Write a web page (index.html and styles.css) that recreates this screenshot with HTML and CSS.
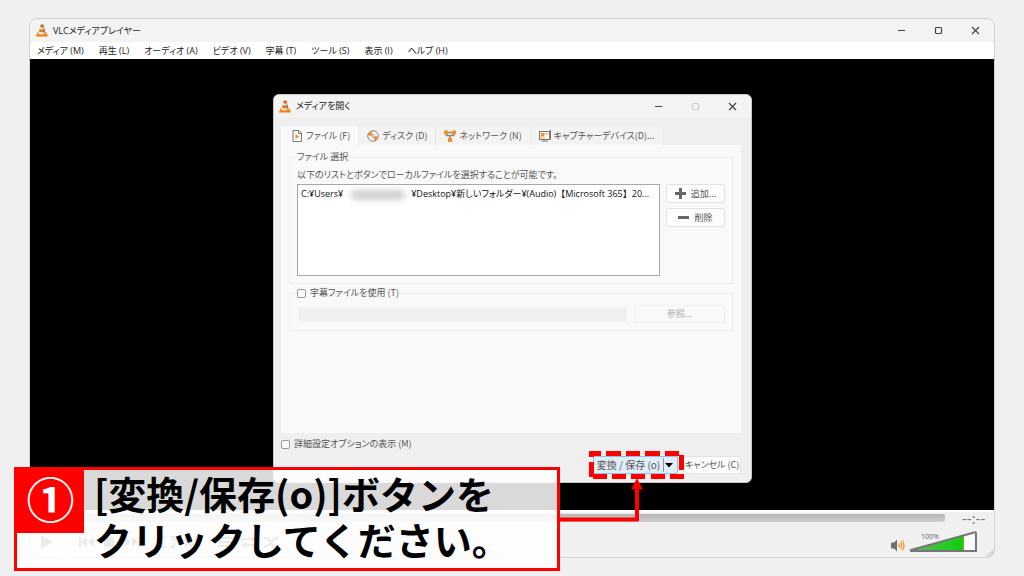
FILE: index.html
```html
<!DOCTYPE html>
<html lang="ja">
<head>
<meta charset="utf-8">
<title>VLCメディアプレイヤー</title>
<link rel="stylesheet" href="styles.css">
</head>
<body>
<svg class="defs" width="0" height="0" aria-hidden="true">
  <symbol id="cone" viewBox="0 0 24 26">
    <path d="M3 17h18l3 8H0z" fill="#f57c00"/>
    <path d="M3 17h18l1 4H2z" fill="#ff9a2a"/>
    <path d="M9.500 1h5l5 18q-7.500 4-15 0z" fill="#e4e4e4"/>
    <path d="M9.500 1h5l1.400 5q-3.900 1.500-7.800 0z" fill="#d8701a"/>
    <path d="M7 10q5 2 10 0l1.400 5q-6.500 2.500-12.800 0z" fill="#e07a20"/>
    <path d="M14.500 1l5 18q-2 1-4 1.500L13 1z" fill="#6a5a50" opacity=".45"/>
  </symbol>
</svg>

<main class="player">
  <header class="titlebar">
    <svg class="app-icon"><use href="#cone"/></svg>
    <h1 class="title">VLCメディアプレイヤー</h1>
    <div class="window-buttons">
      <button type="button" aria-label="最小化"><svg viewBox="0 0 9 9"><path d="M1 4.500h7"/></svg></button>
      <button type="button" aria-label="最大化"><svg viewBox="0 0 9 9"><rect x="1.500" y="1.500" width="6" height="6" rx="1"/></svg></button>
      <button type="button" aria-label="閉じる"><svg viewBox="0 0 9 9"><path d="M1 1l7 7M8 1l-7 7"/></svg></button>
    </div>
  </header>
  <nav class="menu">
    <a href="#">メディア (M)</a>
    <a href="#">再生 (L)</a>
    <a href="#">オーディオ (A)</a>
    <a href="#">ビデオ (V)</a>
    <a href="#">字幕 (T)</a>
    <a href="#">ツール (S)</a>
    <a href="#">表示 (I)</a>
    <a href="#">ヘルプ (H)</a>
  </nav>
  <div class="video"></div>
  <footer class="controls">
    <div class="seek">
      <div class="track"></div>
      <span class="time">--:--</span>
    </div>
    <div class="toolbar">
      <button type="button" class="play" aria-label="再生"><svg viewBox="0 0 14 16"><path d="M0 0l14 8L0 16z"/></svg></button>
      <div class="group">
        <button type="button" aria-label="前へ"><svg viewBox="0 0 15 10"><path d="M0 0h2v10H0zM8 0v10L2 5zM15 0v10L9 5z"/></svg></button>
        <button type="button" aria-label="停止"><svg viewBox="0 0 15 10"><path d="M2 0h10v10H2z"/></svg></button>
        <button type="button" aria-label="次へ"><svg viewBox="0 0 15 10"><path d="M13 0h2v10h-2zM7 0v10l6-5zM0 0v10l6-5z"/></svg></button>
      </div>
      <div class="group">
        <button type="button" aria-label="全画面"><svg viewBox="0 0 15 12"><path d="M0 0h5v2H2v3H0zM10 0h5v5h-2V2h-3zM0 7h2v3h3v2H0zM13 7h2v5h-5v-2h3z"/></svg></button>
        <button type="button" aria-label="拡張設定"><svg viewBox="0 0 15 12"><path d="M2 0h2v12H2zM7 0h2v12H7zM12 0h2v12h-2zM0 3h6v2H0zM5 7h6v2H5z"/></svg></button>
      </div>
      <div class="group">
        <button type="button" aria-label="プレイリスト"><svg viewBox="0 0 15 12"><path d="M0 1h15v2H0zM0 5h15v2H0zM0 9h15v2H0z"/></svg></button>
        <button type="button" aria-label="リピート"><svg viewBox="0 0 15 12"><path d="M0 5V2h10V0l5 3-5 3V4H2v1zM15 7v3H5v2L0 9l5-3v2h8V7z"/></svg></button>
        <button type="button" aria-label="ランダム"><svg viewBox="0 0 15 12"><path d="M0 1h4l6 8h2V7l3 3-3 2H9L3 3H0zM0 9h3l7-8h2V0l3 2-3 3V3h-1l-7 8H0z"/></svg></button>
      </div>
      <div class="volume">
        <svg class="speaker" viewBox="0 0 14 12"><path d="M0 3h3l3-3v12L3 9H0z" fill="#707070"/><path d="M7.500 4q1.500 2 0 4M9.500 2.500q2.500 3.500 0 7M11.300 1q3.500 5 0 10" fill="none" stroke="#f79a2b" stroke-width="1.300"/></svg>
        <svg class="level" viewBox="0 0 70 24" role="img" aria-label="100%">
          <defs><linearGradient id="vol"><stop offset="0" stop-color="#6fa76f"/><stop offset=".7" stop-color="#22cf22"/><stop offset="1" stop-color="#12c812"/></linearGradient></defs>
          <path d="M2 20L67 2v19H2z" fill="#fafafa"/>
          <path d="M2 20L55 5.500V21H2z" fill="url(#vol)"/>
          <path d="M54.500 6v15" stroke="#78b800" stroke-width="1"/>
          <path d="M2 20L65 2.500q2-.5 2 1V21H3q-2 0-1-1z" fill="none" stroke="#777" stroke-width="2"/>
          <text x="12" y="9" class="percent">100%</text>
        </svg>
      </div>
    </div>
    <svg class="grip" viewBox="0 0 8 8"><path d="M6 0h2v2H6zM3 3h2v2H3zM6 3h2v2H6zM0 6h2v2H0zM3 6h2v2H3zM6 6h2v2H6z"/></svg>
  </footer>
</main>

<section class="dialog" role="dialog" aria-labelledby="dlg-title">
  <header class="dialog-title">
    <svg class="app-icon"><use href="#cone"/></svg>
    <h2 class="title" id="dlg-title">メディアを開く</h2>
    <div class="window-buttons">
      <button type="button" aria-label="最小化"><svg viewBox="0 0 9 9"><path d="M1 4.500h7"/></svg></button>
      <button type="button" aria-label="最大化" disabled><svg viewBox="0 0 9 9"><rect x="1.500" y="1.500" width="6" height="6" rx="1"/></svg></button>
      <button type="button" aria-label="閉じる"><svg viewBox="0 0 9 9"><path d="M1 1l7 7M8 1l-7 7"/></svg></button>
    </div>
  </header>
  <div class="dialog-body">
    <div class="tabs" role="tablist">
      <button type="button" role="tab" aria-selected="true" class="tab active">
        <svg viewBox="0 0 12 12"><path d="M2 .5h6l2.500 2.500v8.500H2z" fill="#fff" stroke="#777"/><path d="M7.500.5V3.500h3" fill="none" stroke="#777"/><path d="M4.500 4l4 2.500-4 2.500z" fill="#f5921e"/></svg>
        ファイル (F)</button>
      <button type="button" role="tab" aria-selected="false" class="tab">
        <svg viewBox="0 0 12 12"><circle cx="6" cy="6" r="5.300" fill="#f4f4f4" stroke="#888"/><path d="M6 6L1 5.500A5 5 0 0 1 4.500 1.300zM6 6l5 .5a5 5 0 0 1-3.500 4.200z" fill="#f5921e"/><circle cx="6" cy="6" r="1.300" fill="#fff" stroke="#999" stroke-width=".8"/></svg>
        ディスク (D)</button>
      <button type="button" role="tab" aria-selected="false" class="tab">
        <svg viewBox="0 0 12 12"><path d="M2 2.500h8M2.500 3v2.500h7V3M6 5v4" stroke="#888" stroke-width="1.500" fill="none"/><path d="M0 .5h4v4H0zM8 .5h4v4H8zM4 8h4v4H4z" fill="#f5921e"/></svg>
        ネットワーク (N)</button>
      <button type="button" role="tab" aria-selected="false" class="tab">
        <svg viewBox="0 0 12 12"><path d="M.6 1.500h10v8H.6z" fill="#fff" stroke="#777" stroke-width="1.200"/><path d="M2 3h3.500v3.500H2z" fill="#f5921e"/><path d="M2 7h4v1.500H2zM6.500 3h2.500v2H6.500z" fill="#fbc57f"/><path d="M11.300 0v9.500M2.500 11h6.500M9.500 1.500H12" stroke="#777" stroke-width="1.200"/></svg>
        キャプチャーデバイス(D)...</button>
    </div>
    <div class="panel" role="tabpanel">
      <fieldset class="box">
        <legend>ファイル 選択</legend>
        <p class="hint">以下のリストとボタンでローカルファイルを選択することが可能です。</p>
        <div class="files">
          <div class="list" role="listbox" aria-label="ファイル">
            <div class="file" role="option"><span>C:¥Users¥</span><i class="masked"></i><span>¥Desktop¥新しいフォルダー¥(Audio)<span class="full">【Microsoft 365】</span>20...</span></div>
          </div>
          <div class="actions">
            <button type="button" class="btn"><svg viewBox="0 0 11 11"><path d="M4 0h3v4h4v3H7v4H4V7H0V4h4z"/></svg>追加...</button>
            <button type="button" class="btn"><svg viewBox="0 0 11 11"><path d="M0 4h11v3H0z"/></svg>削除</button>
          </div>
        </div>
      </fieldset>
      <fieldset class="box subtitles">
        <legend><label class="check"><input type="checkbox">字幕ファイルを使用 (T)</label></legend>
        <div class="browse">
          <input type="text" class="path" aria-label="字幕ファイル" disabled>
          <button type="button" class="btn" disabled>参照...</button>
        </div>
      </fieldset>
    </div>
    <label class="check more"><input type="checkbox">詳細設定オプションの表示 (M)</label>
    <div class="dialog-actions">
      <button type="button" class="btn convert">変換 / 保存 (o)<svg viewBox="0 0 11 14"><path d="M.5 0v14" stroke="#8899a5"/><path d="M2 5h8L6 9.500z"/></svg></button>
      <button type="button" class="btn cancel">キャンセル (C)</button>
    </div>
  </div>
</section>

<svg class="pointer" viewBox="0 0 130 80" aria-hidden="true">
  <path class="dashes" d="M30 4.500h12M47 4.500h15M67 4.500h14M86 4.500h15M106 4.500h14M122.500 6v15M34 27.500h14M53 27.500h14M72 27.500h14M92 27.500h14M111 27.500h14M32.500 4v4M32.500 13v15"/>
  <path class="line" d="M0 70.500h78V38"/>
  <path class="head" d="M78 29l6 12-6-2-6 2z"/>
</svg>

<aside class="callout">
  <span class="number">①</span>
  <p class="message">[変換/保存(o)]ボタンを<br>クリックしてください。</p>
</aside>
</body>
</html>
```
FILE: styles.css
```css
* { box-sizing: border-box; }

body {
  position: relative;
  min-height: 100vh;
  margin: 0;
  padding: 18px 0;
  background: #f0f0f0;
  color: #222;
  font: 9px/14px "Open Sans", "Noto Sans CJK JP", sans-serif;
  font-feature-settings: "palt";
}

button, input {
  font: inherit;
  font-feature-settings: inherit;
  color: inherit;
}

button {
  border: 0;
  padding: 0;
  background: none;
}

svg { display: block; flex: none; }
.defs { position: absolute; }

/* Main window */
.player {
  display: flex;
  flex-direction: column;
  min-height: calc(100vh - 36px);
  margin: 0 29px;
  border: 1px solid #d2d2d2;
  border-radius: 8px;
  background: #f0f0f0;
  overflow: hidden;
}

.titlebar, .dialog-title {
  display: flex;
  align-items: center;
  gap: 5px;
  height: 23px;
  padding: 0 14px 0 6px;
  background: #f3f3f3;
}

.app-icon { width: 12px; height: 13px; }
.title { margin: 0; font-size: 9px; font-weight: 400; }

.window-buttons { display: flex; gap: 28px; margin-left: auto; }
.window-buttons svg {
  width: 9px;
  height: 9px;
  fill: none;
  stroke: #444;
  stroke-width: 1.2;
}
.window-buttons :disabled svg { stroke: #ccc; }

.menu {
  display: flex;
  gap: 15px;
  height: 17px;
  padding: 2px 7px;
  background: #fff;
}
.menu a { color: inherit; text-decoration: none; }

.video { flex: 1; background: #000; }

.controls { position: relative; height: 47px; border-top: 2px solid #fafafa; }

.seek { display: flex; align-items: center; gap: 17px; padding: 0 8px; height: 12px; }
.track {
  flex: 1;
  height: 8px;
  border-radius: 2px;
  background: linear-gradient(#b4b4b4, #cfcfcf);
}
.time { width: 24px; color: #777; font-size: 15px; line-height: 12px; }

.toolbar { display: flex; align-items: center; gap: 12px; height: 30px; padding-right: 15px; margin-top: 3px; }
.toolbar button { padding: 7px 4px; background: #f8f8f8; }
.toolbar button svg { width: 15px; height: 12px; fill: #777; }
.toolbar .play { padding: 6px 9px 6px 10px; }
.toolbar .play svg { width: 14px; height: 14px; }
.group { display: flex; }
.volume { display: flex; align-items: center; gap: 4px; margin-left: auto; }
.speaker { width: 14px; height: 13px; margin-top: 6px; }
.level { width: 70px; height: 24px; }
.percent { font-size: 7px; fill: #666; }
.grip { position: absolute; right: 1px; bottom: 1px; width: 6px; height: 6px; fill: #c0c0c0; }

/* Open media dialog */
.dialog {
  position: absolute;
  left: 273px;
  top: 94px;
  width: 479px;
  border: 1px solid #c8c8c8;
  border-radius: 6px;
  background: #efefef;
  color: #555;
  font-family: "Noto Sans CJK JP", sans-serif;
  overflow: hidden;
}
.dialog-title { height: 22px; padding: 0 14px 0 5px; color: #222; }
.dialog-body { padding: 9px 10px 8px 7px; }

.tabs { display: flex; align-items: flex-end; }
.tab {
  display: flex;
  align-items: center;
  gap: 3px;
  height: 18px;
  padding: 0 8px;
  border-right: 1px solid #eaeaea;
  background: #f3f3f3;
  white-space: nowrap;
}
.tab.active { height: 19px; background: #f9f9f9; padding-left: 10px; }
.tab svg { width: 12px; height: 12px; }

.panel { height: 288px; padding: 5px 8px; background: #f9f9f9; }

.box {
  min-width: 0;
  margin: 0 0 2px;
  padding: 4px 7px 7px;
  border: 1px solid #ebebeb;
}
.box legend { padding: 0; line-height: 14px; }
.hint { margin: 0 0 2px; line-height: 14px; }

.files { display: flex; gap: 6px; }
.list {
  flex: 1;
  min-width: 0;
  height: 92px;
  padding: 2px 3px;
  border: 1px solid #a5a9ae;
  background: #fff;
  color: #111;
}
.file {
  display: flex;
  font-family: "Open Sans", "Noto Sans CJK JP", sans-serif;
  white-space: nowrap;
}
.full { font-feature-settings: normal; }
.masked {
  width: 54px;
  height: 10px;
  margin: 3px 6px 0 8px;
  border-radius: 4px;
  background: #d0d0d0;
  filter: blur(3px);
}
.actions { display: flex; flex-direction: column; gap: 5px; width: 59px; }

.btn {
  display: flex;
  align-items: center;
  justify-content: center;
  gap: 5px;
  height: 19px;
  border: 1px solid #e2e2e2;
  border-radius: 2px;
  background: #fdfdfd;
  white-space: nowrap;
}
.btn svg { width: 11px; height: 11px; fill: #666; }
.btn:disabled { background: #f9f9f9; border-color: #f0f0f0; color: #aaa; }

.subtitles { padding: 5px 7px 7px; }
.check { display: flex; align-items: center; gap: 4px; }
.check input {
  appearance: none;
  width: 9px;
  height: 9px;
  margin: 0;
  border: 1px solid #999;
  border-radius: 2px;
  background: #fafafa;
}
.browse { display: flex; align-items: center; gap: 6px; }
.path {
  flex: 1;
  min-width: 0;
  height: 17px;
  padding: 0;
  border: 2px solid #f6f6f6;
  background: #efefef;
}
.browse .btn { width: 91px; height: 18px; }

.more { margin-top: 4px; }
.dialog-actions { display: flex; justify-content: flex-end; gap: 5px; margin-top: 5px; }
.dialog-actions .btn { height: 18px; }
.dialog-actions .convert { width: 85px; background: #e1eef8; border-color: #8fbfe3; font-size: 10px; gap: 3px; }
.dialog-actions .convert svg { width: 11px; height: 14px; fill: #000; }
.dialog-actions .cancel { width: 58px; }

/* Annotation */
.pointer {
  position: absolute;
  left: 559px;
  top: 449px;
  width: 130px;
  height: 80px;
  fill: none;
  stroke: #f00;
}
.dashes { stroke-width: 5; }
.line { stroke-width: 4; }
.head { fill: #f00; stroke: none; }

.callout {
  position: absolute;
  left: 14px;
  top: 467px;
  display: flex;
  align-items: flex-start;
  width: 546px;
  height: 104px;
  border: 3px solid #f00;
  background: rgba(255, 255, 255, .85);
  color: #000;
  font-family: "Noto Sans CJK JP", sans-serif;
  font-feature-settings: normal;
}
.number {
  width: 67px;
  height: 63px;
  background: #f00;
  color: #fff;
  font-size: 48px;
  font-weight: 700;
  line-height: 54px;
  text-align: center;
}
.message {
  margin: 0;
  padding-left: 10px;
  font-size: 38px;
  font-weight: 700;
  line-height: 46px;
  white-space: nowrap;
}
```
